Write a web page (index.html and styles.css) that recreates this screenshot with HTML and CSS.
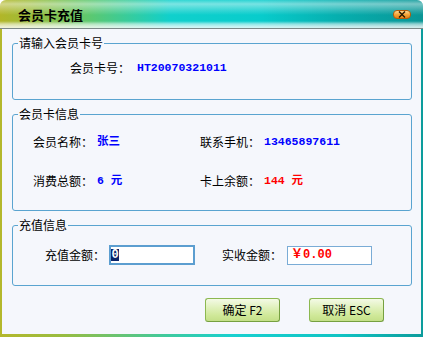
FILE: index.html
```html
<!DOCTYPE html>
<html>
<head>
<meta charset="utf-8">
<link rel="stylesheet" href="styles.css">
</head>
<body>
<div class="window">
  <div class="titlebar">
    <span class="title">会员卡充值</span>
    <span class="close"><svg width="8" height="7" viewBox="0 0 8 7"><path d="M1 0.5 L7 6.5 M7 0.5 L1 6.5" stroke="#2a1a00" stroke-width="1.4" fill="none"/></svg></span>
  </div>
  <div class="frame">
    <div class="content">
      <fieldset class="group g1">
        <legend>请输入会员卡号</legend>
        <div class="row">
          <span class="label">会员卡号：</span><span class="val blue">HT20070321011</span>
        </div>
      </fieldset>
      <fieldset class="group g2">
        <legend>会员卡信息</legend>
        <div class="grid">
          <div class="cell"><span class="label">会员名称：</span><span class="val blue">张三</span></div>
          <div class="cell"><span class="label">联系手机：</span><span class="val blue">13465897611</span></div>
          <div class="cell"><span class="label">消费总额：</span><span class="val blue">6 元</span></div>
          <div class="cell"><span class="label">卡上余额：</span><span class="val red">144 元</span></div>
        </div>
      </fieldset>
      <fieldset class="group g3">
        <legend>充值信息</legend>
        <div class="row3">
          <span class="label">充值金额：</span>
          <div class="input focus"><span class="sel">0</span></div>
          <span class="label l2">实收金额：</span>
          <div class="input plain"><span class="val red">￥0.00</span></div>
        </div>
      </fieldset>
      <div class="buttons">
        <div class="btn">确定 F2</div>
        <div class="btn">取消 ESC</div>
      </div>
    </div>
  </div>
</div>
</body>
</html>
```

FILE: styles.css
```css
html, body {
  margin: 0;
  padding: 0;
  background: #ffffff;
}

.window {
  width: 423px;
  height: 337px;
  display: flex;
  flex-direction: column;
  font: 12px/14px "Noto Sans CJK SC", sans-serif;
  color: #000;
}

.titlebar {
  height: 29px;
  box-sizing: border-box;
  border-bottom: 1px solid #7c8888;
  border-radius: 6px 6px 0 0;
  display: flex;
  align-items: center;
  justify-content: space-between;
  padding: 0 12px 0 18px;
  background:
    linear-gradient(to bottom,
      rgba(255,255,255,0.15) 0px,
      rgba(255,255,255,0.45) 4px,
      rgba(255,255,255,0.15) 11px,
      rgba(255,255,255,0) 15px,
      rgba(255,255,255,0) 21px,
      rgba(255,255,255,0.55) 24px,
      rgba(255,255,255,0.8) 27px),
    linear-gradient(to right, #b2b628 0px, #9cbc3a 30px, #5cc870 90px, #10d0cc 170px, #08cccc 260px, #06aeae 340px, #0a9696 423px);
}

.title {
  font-size: 13px;
  font-weight: bold;
  padding-top: 1px;
}

.close {
  width: 18px;
  height: 9px;
  box-sizing: border-box;
  border: 1px solid #b85a08;
  border-radius: 4px;
  background: linear-gradient(to bottom, #ffd890 0%, #f6a63a 50%, #e88418 100%);
  display: flex;
  align-items: center;
  justify-content: center;
}

.frame {
  flex: 1;
  display: flex;
  padding: 0 2px 3px 2px;
  background: linear-gradient(to right, #b4b82c 0%, #98bc40 15%, #3ccaa0 40%, #18d0d0 55%, #10c4c4 80%, #0c9c9c 100%);
}

.content {
  flex: 1;
  background: #f5f7fc;
  padding-top: 7px;
  display: flex;
  flex-direction: column;
}

.group {
  margin: 0 9px 0 10px;
  border: 1px solid #5aa4d0;
  border-radius: 3px;
  padding: 0;
  min-width: 0;
}

.group + .group {
  margin-top: 7px;
}

.group legend {
  margin-left: 5px;
  padding: 0 1px;
  line-height: 14px;
}

.label {
  white-space: nowrap;
}

.val {
  font-family: "Liberation Mono", "Noto Sans CJK SC", monospace;
  font-weight: bold;
  font-size: 11.5px;
  line-height: 14px;
}

.blue { color: #0000ff; }
.red { color: #ff0000; }

.row, .cell {
  display: flex;
  align-items: center;
  height: 14px;
}

.g1 .row {
  padding: 11px 0 24px 57px;
}

.g1 .val {
  margin-left: 7px;
}

.grid {
  display: grid;
  grid-template-columns: 167px 1fr;
  grid-auto-rows: 14px;
  row-gap: 25px;
  padding: 14px 0 22px 20px;
}

.cell .val {
  margin-left: 4px;
}

.row3 {
  display: flex;
  align-items: center;
  height: 20px;
  padding: 13px 0 20px 32px;
}

.input {
  box-sizing: border-box;
  background: #ffffff;
  display: flex;
  align-items: center;
}

.input.focus {
  width: 86px;
  height: 20px;
  margin-left: 4px;
  border: 2px solid #5c9ed0;
}

.sel {
  background: #0a246a;
  color: #ffffff;
  font-family: "Liberation Mono", monospace;
  font-weight: bold;
  font-size: 12px;
  line-height: 12px;
  height: 12px;
  width: 8px;
  text-align: center;
}

.l2 {
  margin-left: 27px;
}

.input.plain {
  width: 85px;
  height: 19px;
  margin-left: 5px;
  border: 1px solid #7aacd6;
  padding-left: 3px;
}

.input.plain .val {
  font-size: 12px;
}

.buttons {
  display: flex;
  justify-content: flex-end;
  gap: 29px;
  margin-top: 12px;
  padding-right: 37px;
}

.btn {
  width: 75px;
  height: 24px;
  box-sizing: border-box;
  border: 1px solid #8cb850;
  border-right-color: #76a040;
  border-bottom-color: #76a040;
  border-radius: 3px;
  background: linear-gradient(to bottom, #f4fae6 0%, #e2f2c0 35%, #cfe898 75%, #c4e088 100%);
  display: flex;
  align-items: center;
  justify-content: center;
  white-space: pre;
}
```
